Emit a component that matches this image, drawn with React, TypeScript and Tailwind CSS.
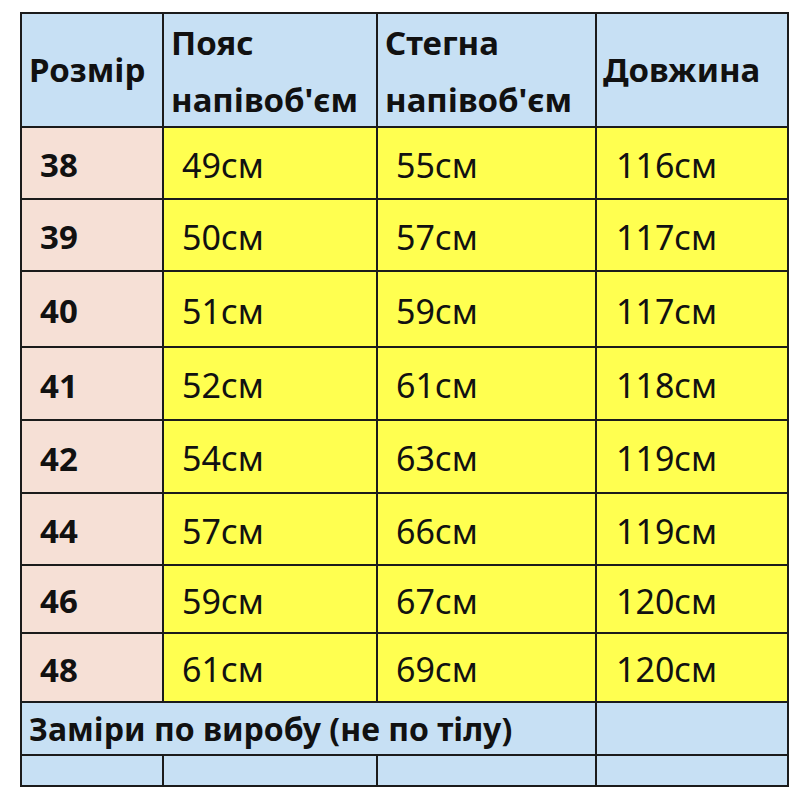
const font = { fontFamily: '"Noto Sans", "DejaVu Sans", sans-serif' };

interface SizeRow {
  size: string;
  waist: string;
  hips: string;
  length: string;
  h: string;
}

const rows: SizeRow[] = [
  { size: "38", waist: "49см", hips: "55см", length: "116см", h: "h-[70px]" },
  { size: "39", waist: "50см", hips: "57см", length: "117см", h: "h-[70px]" },
  { size: "40", waist: "51см", hips: "59см", length: "117см", h: "h-[74px]" },
  { size: "41", waist: "52см", hips: "61см", length: "118см", h: "h-[71px]" },
  { size: "42", waist: "54см", hips: "63см", length: "119см", h: "h-[71px]" },
  { size: "44", waist: "57см", hips: "66см", length: "119см", h: "h-[70px]" },
  { size: "46", waist: "59см", hips: "67см", length: "120см", h: "h-[66px]" },
  { size: "48", waist: "61см", hips: "69см", length: "120см", h: "h-[67px]" },
];

export default function App() {
  return (
    <div className="w-[800px] h-[800px] bg-white pt-3 pl-5" style={font}>
      <div className="inline-grid grid-cols-[140px_212px_217px_190px] gap-[2px] p-[2px] bg-[#1b1b1b] text-[#111] text-[33px]">
        {/* Header */}
        <div className="h-[112px] bg-[#c7e0f4] flex items-center pl-[7px] font-bold">Розмір</div>
        <div className="h-[112px] bg-[#c7e0f4] flex flex-col justify-center pl-[7px] font-bold leading-[57px] pt-[2px]">
          <span>Пояс</span>
          <span>напівоб'єм</span>
        </div>
        <div className="h-[112px] bg-[#c7e0f4] flex flex-col justify-center pl-[7px] font-bold leading-[57px] pt-[2px]">
          <span>Стегна</span>
          <span>напівоб'єм</span>
        </div>
        <div className="h-[112px] bg-[#c7e0f4] flex items-center pl-[6px] font-bold">Довжина</div>

        {/* Rows */}
        {rows.map((r) => (
          <div key={r.size} className="contents">
            <div className={`${r.h} bg-[#f6e0d6] flex items-center pl-[18px] pt-[4px] font-bold`}>{r.size}</div>
            <div className={`${r.h} bg-[#ffff50] flex items-center pl-[18px] pt-[4px] text-[34px]`}>{r.waist}</div>
            <div className={`${r.h} bg-[#ffff50] flex items-center pl-[18px] pt-[4px] text-[34px]`}>{r.hips}</div>
            <div className={`${r.h} bg-[#ffff50] flex items-center pl-[19px] pt-[4px] text-[34px]`}>{r.length}</div>
          </div>
        ))}

        {/* Note */}
        <div className="col-span-3 h-[51px] bg-[#c7e0f4] flex items-center pl-[7px] font-bold whitespace-nowrap text-[32px]">
          Заміри по виробу (не по тілу)
        </div>
        <div className="h-[51px] bg-[#c7e0f4]" />

        {/* Empty last row */}
        <div className="h-[29px] bg-[#c7e0f4]" />
        <div className="h-[29px] bg-[#c7e0f4]" />
        <div className="h-[29px] bg-[#c7e0f4]" />
        <div className="h-[29px] bg-[#c7e0f4]" />
      </div>
    </div>
  );
}
